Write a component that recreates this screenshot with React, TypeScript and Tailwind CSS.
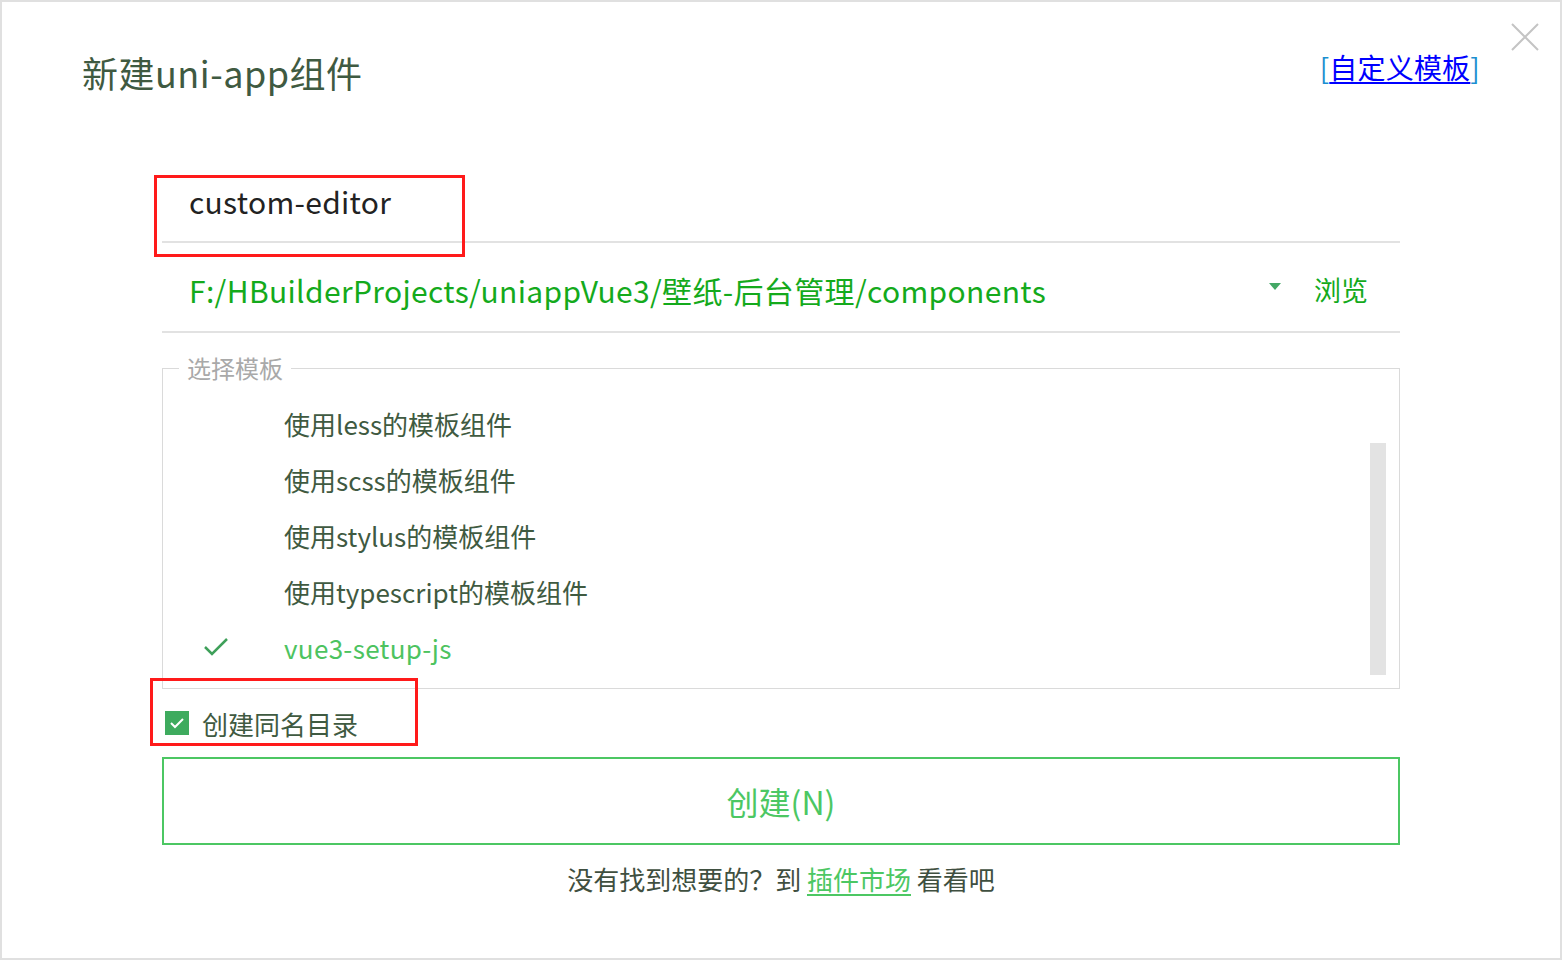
import React from "react";

const FONT = { fontFamily: '"Noto Sans CJK SC", "Noto Sans", sans-serif' };

export default function App() {
  const items = [
    "使用less的模板组件",
    "使用scss的模板组件",
    "使用stylus的模板组件",
    "使用typescript的模板组件",
  ];
  return (
    <div
      className="relative w-[1562px] h-[960px] border-2 border-[#e0e0e0] bg-white overflow-hidden"
      style={FONT}
    >
      {/* close */}
      <svg className="absolute left-[1508px] top-[20px]" width="30" height="30" viewBox="0 0 30 30">
        <path d="M2 2 L28 28 M28 2 L2 28" stroke="#c4c4c4" strokeWidth="2" />
      </svg>

      {/* header */}
      <div className="flex items-start justify-between pl-[80px] pr-[80px] pt-[45px] h-[163px]">
        <div className="text-[36px] leading-[50px] tracking-[0.5px] text-[#3f5a41]">新建uni-app组件</div>
        <div className="text-[28px] leading-[40px] tracking-[0.2px] mt-[0px]">
          <span className="text-[#1a8fd0]">[</span>
          <span className="text-[#0000ff] underline underline-offset-[3px]">自定义模板</span>
          <span className="text-[#1a8fd0]">]</span>
        </div>
      </div>

      <div className="ml-[160px] w-[1238px] flex flex-col">
        {/* name input */}
        <div className="relative h-[78px] border-b-2 border-[#e2e2e2] pl-[27px] flex items-start">
          <span className="text-[30px] leading-[42px] tracking-[0.3px] text-[#222] mt-[15px]">custom-editor</span>
          <div className="absolute left-[-8px] top-[10px] w-[311px] h-[82px] border-[3px] border-[#ff1a1a]" />
        </div>

        {/* path */}
        <div className="h-[90px] border-b-2 border-[#e2e2e2] flex items-center pl-[27px] pr-[32px] pt-[6px]">
          <span className="flex-1 text-[30px] leading-[40px] tracking-[0.35px] text-[#14aa1c]">
            F:/HBuilderProjects/uniappVue3/壁纸-后台管理/components
          </span>
          <svg width="12" height="8" viewBox="0 0 12 8" className="mr-[33px] mb-[6px]">
            <path d="M0 0 L12 0 L6 7 Z" fill="#43a866" />
          </svg>
          <span className="text-[27px] leading-[40px] text-[#14aa1c]">浏览</span>
        </div>

        {/* fieldset */}
        <fieldset className="relative mt-[20px] border border-[#dadada] h-[336px] pb-[10px]">
          <legend className="ml-[16px] px-[8px] text-[24px] leading-[30px] text-[#a9a9a9]">选择模板</legend>
          <div className="flex flex-col mt-[12px]">
            {items.map((t) => (
              <div key={t} className="h-[56px] flex items-center pl-[121px] text-[26px] text-[#3f5a41]">
                {t}
              </div>
            ))}
            <div className="h-[56px] flex items-center pl-[40px] text-[26px] tracking-[0.3px] text-[#4dc35f]">
              <svg width="26" height="22" viewBox="0 0 26 22" className="mr-[55px]">
                <path d="M2 11 L9 18 L24 3" stroke="#3fa05a" strokeWidth="2.5" fill="none" />
              </svg>
              vue3-setup-js
            </div>
          </div>
          <div className="absolute right-[13px] top-[60px] w-[16px] h-[232px] bg-[#e3e3e3]" />
        </fieldset>

        {/* checkbox */}
        <div className="relative h-[68px] flex items-center pl-[3px]">
          <div className="w-[24px] h-[24px] bg-[#3eab5e] flex items-center justify-center">
            <svg width="16" height="12" viewBox="0 0 16 12">
              <path d="M2 6 L6 10 L14 2" stroke="#fff" strokeWidth="2" fill="none" />
            </svg>
          </div>
          <span className="ml-[13px] text-[26px] text-[#3f5a41]">创建同名目录</span>
          <div className="absolute left-[-12px] top-[-11px] w-[268px] h-[68px] border-[3px] border-[#ff1a1a]" />
        </div>

        {/* button */}
        <div className="h-[88px] border-2 border-[#4cc763] flex items-center justify-center text-[32px] text-[#4cc763]">
          创建(N)
        </div>

        {/* footer */}
        <div className="mt-[14px] text-center text-[26px] leading-[40px] text-[#3f4f40]">
          没有找到想要的？到 <span className="text-[#4cc763] underline underline-offset-[4px]">插件市场</span> 看看吧
        </div>
      </div>
    </div>
  );
}
